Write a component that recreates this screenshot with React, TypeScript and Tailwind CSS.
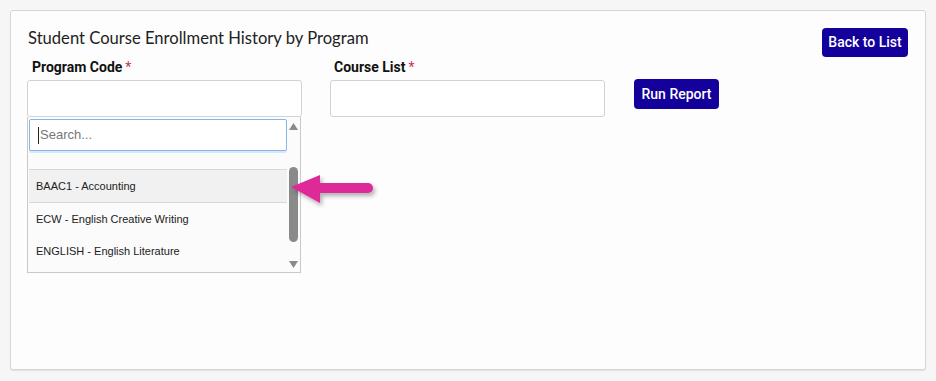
import React from 'react';

const programs = [
  { code: 'BAAC1', name: 'Accounting' },
  { code: 'ECW', name: 'English Creative Writing' },
  { code: 'ENGLISH', name: 'English Literature' },
];

const Required: React.FC = () => <span className="text-[#d0314c] ml-[3px] font-normal">*</span>;

const App: React.FC = () => {
  return (
    <div className="w-[936px] h-[381px] bg-[#f6f6f6] p-[10px] relative">
      <div className="h-[360px] border border-[#d6d6d6] rounded-[3px] bg-[#fdfdfd] shadow-[0_1px_1px_rgba(0,0,0,0.08)] px-[16px] pt-[17px]">
        <div className="flex justify-between items-start pr-[1px]">
          <h1 className="ml-[1px] font-['Lato',sans-serif] text-[16.6px] leading-[20px] text-[#222]">
            Student Course Enrollment History by Program
          </h1>
          <button className="w-[86px] h-[29px] bg-[#14009b] text-white rounded-[4px] font-['Roboto',sans-serif] font-medium text-[14px]">
            Back to List
          </button>
        </div>

        <div className="flex items-start gap-[28px] mt-[2px] font-['Roboto',sans-serif]">
          <div className="w-[275px] relative">
            <label className="block pl-[5px] text-[14px] leading-[16px] font-bold text-[#111]">
              Program Code<Required />
            </label>
            <div className="relative mt-[5px]">
              <div className="h-[37px] border border-[#cfd3d8] rounded-[3px] bg-white" />
              <div className="absolute left-0 top-[37px] w-[274px] h-[156px] border border-t-0 border-[#c9c9c9] bg-[#fbfbfb] flex z-10">
                <div className="w-[259px] pl-px flex flex-col">
                  <div className="pt-[2px]">
                    <div className="h-[32px] border border-[#86b5e8] rounded-[2px] bg-white shadow-[0_2px_0_#d6e7fa] flex items-center pl-[8px] font-['Liberation_Sans',Arial,sans-serif] text-[13px] text-[#777]">
                      <span className="w-px h-[17px] bg-[#222] mr-[1px]" />
                      Search...
                    </div>
                  </div>
                  <div className="mt-[18px] border-t border-[#d8d8d8] font-['Liberation_Sans',Arial,sans-serif] text-[11px] text-[#222]">
                    {programs.map((p, i) => (
                      <div
                        key={p.code}
                        className={
                          i === 0
                            ? 'h-[33px] flex items-center pl-[7px] bg-[#f1f1f1] border-b border-[#d8d8d8]'
                            : 'h-[32px] flex items-center pl-[7px]'
                        }
                      >
                        {p.code} - {p.name}
                      </div>
                    ))}
                  </div>
                </div>
                <div className="flex-1 flex flex-col items-center pt-[6px] pb-[4px]">
                  <svg width="9" height="7" viewBox="0 0 9 7">
                    <path d="M4.5 0 L9 7 L0 7 Z" fill="#8a8a8a" />
                  </svg>
                  <div className="w-[9px] h-[75px] bg-[#8a8a8a] rounded-[5px] mt-[37px]" />
                  <div className="flex-1" />
                  <svg width="9" height="7" viewBox="0 0 9 7">
                    <path d="M0 0 L9 0 L4.5 7 Z" fill="#8a8a8a" />
                  </svg>
                </div>
              </div>
            </div>
          </div>

          <div className="w-[275px]">
            <label className="block pl-[4px] text-[14px] leading-[16px] font-bold text-[#111]">
              Course List<Required />
            </label>
            <div className="mt-[5px] h-[37px] border border-[#cfd3d8] rounded-[3px] bg-white" />
          </div>

          <button className="mt-[20px] ml-px w-[85px] h-[30px] bg-[#14009b] text-white rounded-[4px] font-medium text-[14px]">
            Run Report
          </button>
        </div>
      </div>

      <svg className="absolute left-[286px] top-[170px] z-20" width="95" height="42" viewBox="0 0 95 42">
        <defs>
          <filter id="sh" x="-20%" y="-30%" width="140%" height="160%">
            <feDropShadow dx="2" dy="3" stdDeviation="2" floodColor="#000" floodOpacity="0.3" />
          </filter>
        </defs>
        <g filter="url(#sh)">
          <path d="M5 17 L34 5 L34 33 Z" fill="#dd2a98" />
          <line x1="32" y1="18" x2="82" y2="18" stroke="#dd2a98" strokeWidth="10" strokeLinecap="round" />
        </g>
      </svg>
    </div>
  );
};

export default App;
